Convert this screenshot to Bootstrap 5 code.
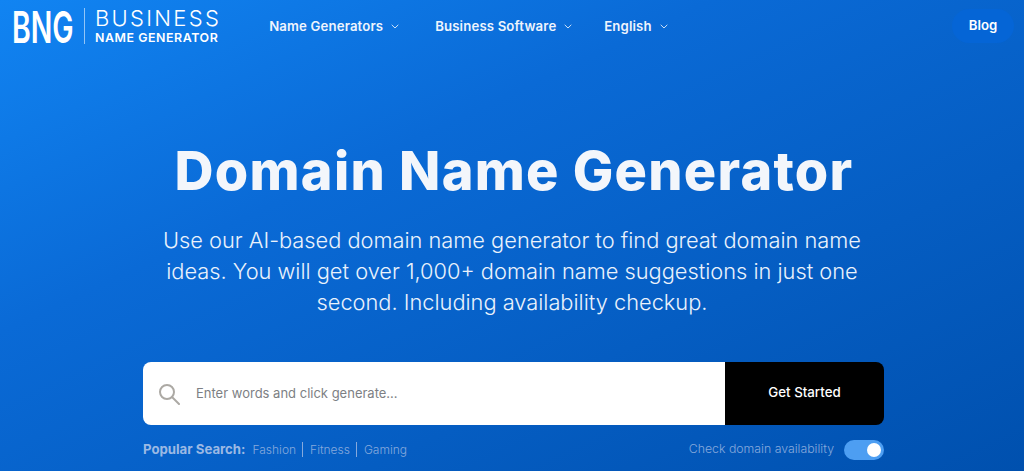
<!doctype html>
<html lang="en"><head><meta charset="utf-8"><title>Domain Name Generator</title>
<link href="https://cdn.jsdelivr.net/npm/bootstrap@5.3.0/dist/css/bootstrap.min.css" rel="stylesheet">
<style>
html,body{height:471px;overflow:hidden}
body{font-family:Inter,"Noto Sans",sans-serif}
.hero-wrap{height:471px;background:linear-gradient(155deg,#1184f2 0%,#0a6ad6 35%,#0050ae 100%);color:#fff}
.top-bar{height:52px;padding:0 10px 0 12px}
.logo-box{height:52px;flex:none}
.logo-mark{width:64px;height:56px;flex:none;display:block;margin-right:-2px}
.logo-mark text{font-family:Inter,sans-serif;font-size:44px;font-weight:600;fill:#fff}
.logo-sep{width:1px;height:36px;flex:none;background:rgba(255,255,255,.55);margin:0 10px 0 10px}
.logo-text{line-height:1;flex:none}
.logo-one{font-size:22px;font-weight:300;letter-spacing:2.3px;margin-bottom:3px;white-space:nowrap}
.logo-two{font-size:12.4px;font-weight:600;letter-spacing:.55px;white-space:nowrap}
.menu-list{margin-left:48px;padding-top:1px;color:#eef4fd}
.menu-item{font-size:13.2px;font-weight:600;letter-spacing:.15px;white-space:nowrap}
.menu-one{width:166px}.menu-two{width:169px}
.menu-item svg{margin-left:8px;opacity:.8}
.blog-pill{width:62px;height:34px;border-radius:17px;background:#0565d6;font-size:13.2px;font-weight:600;color:#fff}
.hero-title{font-size:54px;font-weight:800;line-height:60px;margin:89px 0 0;padding-left:4px;color:#f3f6fb;letter-spacing:1.25px}
.hero-copy{width:712px;font-size:21.8px;font-weight:300;line-height:31px;margin:24px auto 0;color:#eaf2fc}
.search-box{width:741px;height:63px;margin:44px 0 0 143px;border-radius:8px;overflow:hidden}
.search-left{background:#fff;width:582px;padding-left:15px}
.search-ph{font-size:13px;color:#7d7f84;margin-left:16px;padding-top:1px}
.search-go{background:#000;width:159px;color:#fff;font-size:13.3px;font-weight:500;border:0;border-radius:0;padding-bottom:8px}
.under-row{width:741px;margin:13px 0 0 143px;height:23px;font-size:12.3px;color:#86a9dc}
.pop-label{font-weight:700;color:#9bb9e4;font-size:13.2px;margin-right:7px}
.pop-link{padding:0 6px 0 7px;border-right:1px solid #86a9dc;line-height:15px;font-weight:300;font-size:12px}
.pop-link:last-child{border:0}
.pop-first{padding-left:0}
.tog-track{width:40px;height:20px;border-radius:10px;background:#4d9ef2;margin-left:10px;padding:0 3px}
.tog-knob{width:14px;height:14px;border-radius:50%;background:#fff}
.avail-text{font-weight:300}
</style></head>
<body>
<div class="hero-wrap">
<nav class="top-bar d-flex align-items-center">
  <div class="logo-box d-flex align-items-center">
    <svg class="logo-mark" viewBox="0 0 99 56" preserveAspectRatio="none"><text x="0" y="45">BNG</text></svg>
    <div class="logo-sep"></div>
    <div class="logo-text"><div class="logo-one">BUSINESS</div><div class="logo-two">NAME GENERATOR</div></div>
  </div>
  <div class="menu-list d-flex align-items-center flex-grow-1">
    <div class="menu-item menu-one">Name Generators<svg width="8" height="5" viewBox="0 0 8 5"><path d="M.7.8 4 4l3.3-3.2" fill="none" stroke="#fff" stroke-width="1"/></svg></div>
    <div class="menu-item menu-two">Business Software<svg width="8" height="5" viewBox="0 0 8 5"><path d="M.7.8 4 4l3.3-3.2" fill="none" stroke="#fff" stroke-width="1"/></svg></div>
    <div class="menu-item">English<svg width="8" height="5" viewBox="0 0 8 5"><path d="M.7.8 4 4l3.3-3.2" fill="none" stroke="#fff" stroke-width="1"/></svg></div>
  </div>
  <div class="blog-pill d-flex align-items-center justify-content-center">Blog</div>
</nav>
<main class="text-center">
  <h1 class="hero-title">Domain Name Generator</h1>
  <p class="hero-copy">Use our AI-based domain name generator to find great domain name ideas. You will get over 1,000+ domain name suggestions in just one second. Including availability checkup.</p>
</main>
<div class="search-box d-flex">
  <div class="search-left d-flex align-items-center">
    <svg width="22" height="22" viewBox="0 0 22 22" fill="none" stroke="#aca9a4" stroke-width="2"><circle cx="9" cy="9" r="7"/><path d="m14 14 7 7" stroke-linecap="round"/></svg>
    <span class="search-ph">Enter words and click generate...</span>
  </div>
  <button class="search-go btn">Get Started</button>
</div>
<div class="under-row d-flex align-items-center justify-content-between">
  <div class="d-flex align-items-center"><span class="pop-label">Popular Search:</span><span class="pop-link pop-first">Fashion</span><span class="pop-link">Fitness</span><span class="pop-link">Gaming</span></div>
  <div class="d-flex align-items-center"><span class="avail-text">Check domain availability</span><span class="tog-track d-flex align-items-center justify-content-end"><span class="tog-knob"></span></span></div>
</div>
</div>
<script src="https://cdn.jsdelivr.net/npm/bootstrap@5.3.0/dist/js/bootstrap.bundle.min.js"></script>
</body></html>
